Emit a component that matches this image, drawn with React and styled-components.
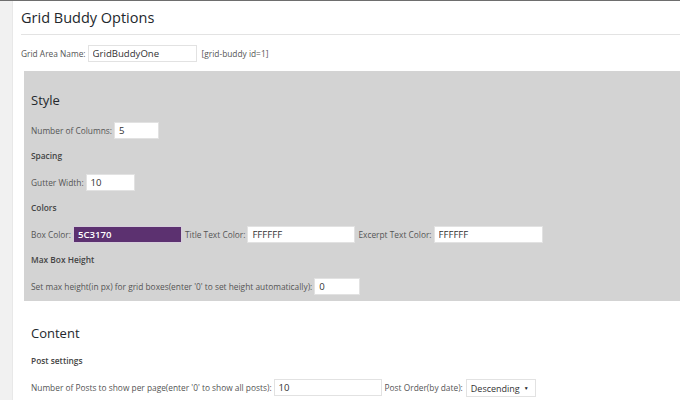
import React from 'react';
import styled, { createGlobalStyle } from 'styled-components';

const GlobalStyle = createGlobalStyle`
  html, body {
    margin: 0;
    padding: 0;
    background: #fff;
    font-family: 'Open Sans', 'Liberation Sans', sans-serif;
    color: #444;
  }
`;

const App = () => {
  return (
    <>
      <GlobalStyle />
      <Page>
        <Sidebar />
        <Main>
          <PageTitle>Grid Buddy Options</PageTitle>
          <Rule />
          <FieldRow>
            <Label>Grid Area Name:</Label>
            <TextInput width={109} defaultValue="GridBuddyOne" />
            <Shortcode>[grid-buddy id=1]</Shortcode>
          </FieldRow>

          <StylePanel>
            <SectionTitle>Style</SectionTitle>
            <FieldRow>
              <Label>Number of Columns:</Label>
              <TextInput width={45} defaultValue="5" />
            </FieldRow>

            <SubHeading>Spacing</SubHeading>
            <FieldRow>
              <Label>Gutter Width:</Label>
              <TextInput width={49} defaultValue="10" />
            </FieldRow>

            <SubHeading>Colors</SubHeading>
            <FieldRow>
              <Label>Box Color:</Label>
              <TextInput width={109} swatch="#5c3170" defaultValue="5C3170" />
              <Label>Title Text Color:</Label>
              <TextInput width={108} defaultValue="FFFFFF" />
              <Label>Excerpt Text Color:</Label>
              <TextInput width={109} defaultValue="FFFFFF" />
            </FieldRow>

            <SubHeading>Max Box Height</SubHeading>
            <FieldRow>
              <Label>Set max height(in px) for grid boxes(enter '0' to set height automatically):</Label>
              <TextInput width={46} defaultValue="0" />
            </FieldRow>
          </StylePanel>

          <ContentSection>
            <SectionTitle>Content</SectionTitle>
            <SubHeading>Post settings</SubHeading>
            <FieldRow>
              <Label>Number of Posts to show per page(enter '0' to show all posts):</Label>
              <TextInput width={108} defaultValue="10" />
              <Label>Post Order(by date):</Label>
              <Select>
                <span>Descending</span>
                <Caret>▼</Caret>
              </Select>
            </FieldRow>
          </ContentSection>
        </Main>
      </Page>
    </>
  );
};

export default App;

// Styled Components
const Page = styled.div`
  display: flex;
  min-height: 400px;
  border-top: 1px solid #6e6e6e;
  overflow: hidden;
`;

const Sidebar = styled.div`
  width: 12px;
  flex-shrink: 0;
  background: #f1f1f1;
  border-right: 1px solid #e8e8e8;
`;

const Main = styled.div`
  flex: 1;
  padding-left: 8px;
`;

const PageTitle = styled.h1`
  margin: 7px 0 0;
  font-size: 14.5px;
  line-height: 20px;
  font-weight: 400;
  color: #23282d;
`;

const Rule = styled.div`
  height: 1px;
  margin-top: 6px;
  background: #e3e3e3;
`;

const FieldRow = styled.div`
  display: flex;
  align-items: center;
  gap: 2px;
  margin-top: 10px;
  height: 17px;
`;

const Label = styled.span`
  font-size: 8.35px;
  color: #555;
  white-space: nowrap;
`;

const Shortcode = styled(Label)`
  margin-left: 2px;
`;

const TextInput = styled.input.attrs({ type: 'text' })`
  box-sizing: border-box;
  width: ${(p) => p.width}px;
  height: 17px;
  padding: 0 4px;
  border: 1px solid ${(p) => (p.swatch ? '#d6cddb' : '#e2e2e2')};
  background: ${(p) => p.swatch || '#fff'};
  color: ${(p) => (p.swatch ? '#fff' : '#333')};
  font-family: 'Open Sans', 'Liberation Sans', sans-serif;
  font-size: 9.6px;
  font-weight: ${(p) => (p.swatch ? 600 : 400)};
  outline: none;
  margin-right: 1px;
`;

const SectionTitle = styled.h2`
  margin: 0;
  font-size: 13px;
  line-height: 18px;
  font-weight: 400;
  color: #23282d;
`;

const SubHeading = styled.h4`
  margin: 11px 0 0;
  font-size: 8.35px;
  line-height: 12px;
  font-weight: 600;
  color: #444;
`;

const StylePanel = styled.section`
  margin: 9px 0 0 3px;
  padding: 20px 7px 6px;
  background: #d3d3d3;

  & > ${FieldRow} {
    margin-top: 12px;
  }
  & > ${SectionTitle} + ${FieldRow} {
    margin-top: 13px;
  }
`;

const ContentSection = styled.section`
  margin-left: 3px;
  padding: 23px 7px 0;

  & > ${SubHeading} {
    margin-top: 13px;
  }
  & > ${FieldRow} {
    margin-top: 11px;
    height: 18px;
  }
`;

const Select = styled.div`
  box-sizing: border-box;
  width: 70px;
  height: 18px;
  margin: 2px 0 0 1px;
  display: flex;
  align-items: center;
  justify-content: space-between;
  padding: 0 6px 0 4px;
  border: 1px solid #e2e2e2;
  background: #fff;
  font-size: 9px;
  color: #333;
`;

const Caret = styled.span`
  font-size: 5px;
  color: #222;
`;
